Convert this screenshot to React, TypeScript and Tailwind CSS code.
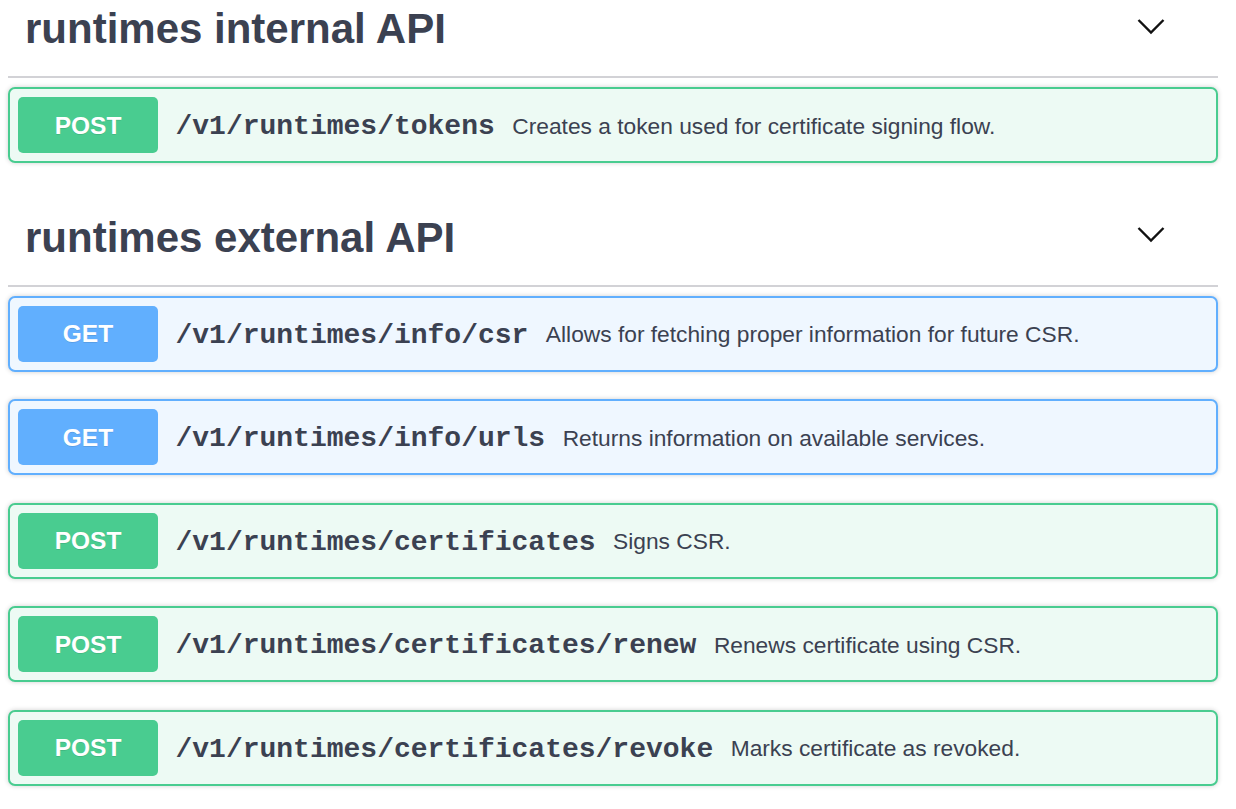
import React from "react";

type Op = { method: "GET" | "POST"; path: string; desc: string };

const internalOps: Op[] = [
  { method: "POST", path: "/v1/runtimes/tokens", desc: "Creates a token used for certificate signing flow." },
];

const externalOps: Op[] = [
  { method: "GET", path: "/v1/runtimes/info/csr", desc: "Allows for fetching proper information for future CSR." },
  { method: "GET", path: "/v1/runtimes/info/urls", desc: "Returns information on available services." },
  { method: "POST", path: "/v1/runtimes/certificates", desc: "Signs CSR." },
  { method: "POST", path: "/v1/runtimes/certificates/renew", desc: "Renews certificate using CSR." },
  { method: "POST", path: "/v1/runtimes/certificates/revoke", desc: "Marks certificate as revoked." },
];

function Chevron() {
  return (
    <svg width="28" height="18" viewBox="0 0 28 18" className="mb-[5px] mr-[53px]" fill="none">
      <polyline points="1.5,2 14,14.5 26.5,2" stroke="#111" strokeWidth="2.4" />
    </svg>
  );
}

function TagHeading({ title, first }: { title: string; first?: boolean }) {
  return (
    <div
      className={
        "flex h-[96px] items-center justify-between border-b-2 border-[#d2d2d6] " +
        (first ? "-mt-[18px]" : "")
      }
    >
      <h3 className="pl-[17px] text-[42px] font-bold leading-[42px] text-[#3b4151]">{title}</h3>
      <Chevron />
    </div>
  );
}

function OpBlock({ op }: { op: Op }) {
  const isGet = op.method === "GET";
  return (
    <div
      className={
        "mb-[27.5px] flex h-[76px] items-center rounded-[7px] border-2 p-[8px] shadow-[0_0_5px_rgba(0,0,0,0.19)] " +
        (isGet ? "border-[#61affe] bg-[#eff7ff]" : "border-[#49cc90] bg-[#edfaf4]")
      }
    >
      <div
        className={
          "flex h-[56px] w-[140px] shrink-0 items-center justify-center rounded-[5px] pt-[2px] text-[24.5px] font-bold text-white [text-shadow:0_1px_0_rgba(0,0,0,0.1)] " +
          (isGet ? "bg-[#61affe]" : "bg-[#49cc90]")
        }
      >
        {op.method}
      </div>
      <span className="px-[17.5px] pt-[4px] font-['Liberation_Mono',monospace] text-[28px] font-bold text-[#3b4151]">
        {op.path}
      </span>
      <span className="pt-[2px] text-[22.75px] text-[#3b4151]">{op.desc}</span>
    </div>
  );
}

export default function App() {
  return (
    <div className="h-[809px] w-[1236px] overflow-hidden bg-white font-['Liberation_Sans',Arial,sans-serif]">
      <div className="pl-[8px] pr-[18px]">
        <TagHeading title="runtimes internal API" first />
        <div className="mt-[9px]">
          {internalOps.map((op) => (
            <OpBlock key={op.path} op={op} />
          ))}
        </div>
        <TagHeading title="runtimes external API" />
        <div className="mt-[9px]">
          {externalOps.map((op) => (
            <OpBlock key={op.path} op={op} />
          ))}
        </div>
      </div>
    </div>
  );
}
